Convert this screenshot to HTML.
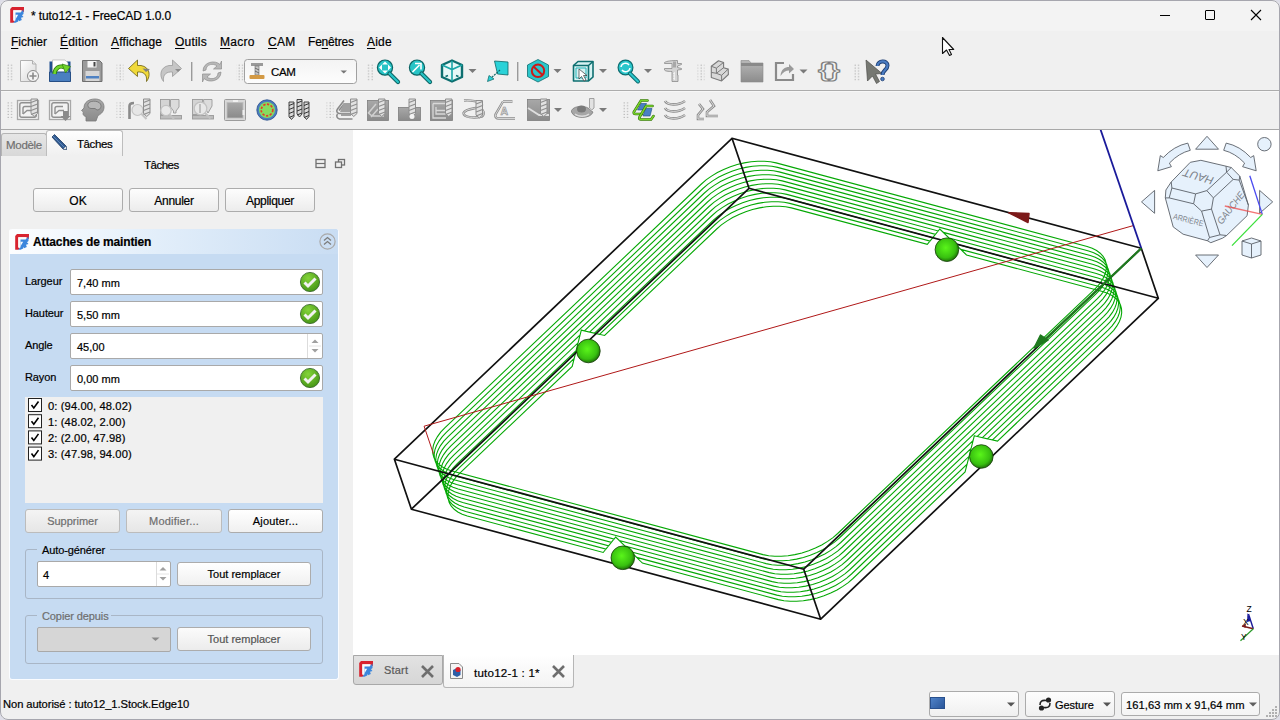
<!DOCTYPE html>
<html><head><meta charset="utf-8">
<style>
*{margin:0;padding:0;box-sizing:border-box}
html,body{width:1280px;height:720px;overflow:hidden;background:#dedee8;font-family:"Liberation Sans",sans-serif;font-size:12px;color:#000}
.a{position:absolute}
.t{position:absolute;white-space:nowrap;line-height:1;-webkit-text-stroke:0.2px currentColor}
#title{left:0;top:0;width:1280px;height:31px;background:#f3f3f3;border-radius:8px 8px 0 0}
.ul{text-decoration:underline;text-underline-offset:2px}
.grip{position:absolute;width:5px;background-image:radial-gradient(circle,#9a9a9a 0.7px,transparent 0.9px);background-size:3px 3px}
.btn{position:absolute;-webkit-text-stroke:0.2px currentColor;border:1px solid #acacac;border-radius:3px;background:linear-gradient(#fdfdfd,#ececec);text-align:center;line-height:21px}
.field{position:absolute;background:#fff;border:1px solid #a9a9a9;border-radius:2px}
</style></head><body>
<!-- window border -->
<div class="a" style="left:0;top:0;width:1280px;height:720px;background:#f0f0f0;border-radius:8px"></div>

<!-- TITLE BAR -->
<div id="title" class="a">
  <svg class="a" style="left:0;top:0" width="32" height="30"><g id="fclogo"><path d="M10.2,9L12,7H24V11.5L21.5,13.5V10.2H13.3V20.5L15,21L13.5,22.8H10.2Z" fill="#d8232f"/><path d="M13.3,10.2H21.5V13.5L15,20.5H13.3Z" fill="#fafafa"/><path d="M15.5,12.5H20.5L23.5,9.5V14L22,15.2L23.5,17L21,17.8L21.8,20L19,21.3L18.2,19.8V21.5L15.5,22.8H13.2L15.5,20.3Z" fill="#3b86dc"/><path d="M18.2,14.8H15.5V19.3" fill="#fafafa"/></g></svg>

  <div class="t" style="left:31px;top:10px;font-size:12px;letter-spacing:-0.1px">* tuto12-1 - FreeCAD 1.0.0</div>
  <div class="a" style="left:1160px;top:15px;width:10px;height:1px;background:#000"></div>
  <div class="a" style="left:1205px;top:10px;width:10px;height:10px;border:1px solid #000;border-radius:1px"></div>
  <svg class="a" style="left:1250px;top:9px" width="12" height="12"><path d="M1,1L11,11M11,1L1,11" stroke="#000" stroke-width="1.1"/></svg>
</div>

<!-- MENU -->
<div class="t" style="left:11px;top:36px;letter-spacing:0px"><span class="ul">F</span>ichier</div>
<div class="t" style="left:60px;top:36px;letter-spacing:0.2px"><span class="ul">É</span>dition</div>
<div class="t" style="left:111px;top:36px;letter-spacing:0.15px"><span class="ul">A</span>ffichage</div>
<div class="t" style="left:175px;top:36px;letter-spacing:0.2px"><span class="ul">O</span>utils</div>
<div class="t" style="left:220px;top:36px;letter-spacing:0.25px"><span class="ul">M</span>acro</div>
<div class="t" style="left:268px;top:36px;letter-spacing:0.3px"><span class="ul">C</span>AM</div>
<div class="t" style="left:308px;top:36px;letter-spacing:-0.2px">Fe<span class="ul">n</span>êtres</div>
<div class="t" style="left:367px;top:36px;letter-spacing:0.2px"><span class="ul">A</span>ide</div>

<!-- TOOLBARS -->
<div class="a" style="left:1px;top:90px;width:1278px;height:1px;background:#acacac"></div><div class="a" style="left:1px;top:91px;width:1278px;height:1px;background:#f7f7f7"></div>
<div class="a" style="left:1px;top:129px;width:1278px;height:1px;background:#a8a8a8"></div>
<svg class="a" style="left:0;top:0" width="1280" height="130" viewBox="0 0 1280 130">
<defs>
  <pattern id="gp" width="3.5" height="2.9" patternUnits="userSpaceOnUse"><rect x="0.6" y="0.8" width="1.1" height="1.1" fill="#a8a8a8"/></pattern>
  <linearGradient id="gpage" x1="0" y1="0" x2="1" y2="1"><stop offset="0" stop-color="#fff"/><stop offset="1" stop-color="#d8d8d8"/></linearGradient>
  <linearGradient id="ggray" x1="0" y1="0" x2="0" y2="1"><stop offset="0" stop-color="#b8b8b8"/><stop offset="1" stop-color="#8c8c8c"/></linearGradient>
  <linearGradient id="gcombo" x1="0" y1="0" x2="0" y2="1"><stop offset="0" stop-color="#f3f3f3"/><stop offset="1" stop-color="#fdfdfd"/></linearGradient>
</defs>
<!-- grips row1 -->
<rect x="6" y="63.5" width="7" height="17.4" fill="url(#gp)"/>
<rect x="116.5" y="63.5" width="7" height="17.4" fill="url(#gp)"/>
<rect x="236.5" y="63.5" width="7" height="17.4" fill="url(#gp)"/>
<rect x="366.5" y="63.5" width="7" height="17.4" fill="url(#gp)"/>
<rect x="697.5" y="63.5" width="7" height="17.4" fill="url(#gp)"/>
<rect x="853.5" y="63.5" width="7" height="17.4" fill="url(#gp)"/>
<!-- grips row2 -->
<rect x="6" y="102" width="7" height="17.4" fill="url(#gp)"/>
<rect x="116.5" y="102" width="7" height="17.4" fill="url(#gp)"/>
<rect x="326.5" y="102" width="7" height="17.4" fill="url(#gp)"/>
<rect x="622.5" y="102" width="7" height="17.4" fill="url(#gp)"/>

<!-- ROW 1 -->
<!-- new -->
<path d="M20.5,60.5H32.5L36,64V81.5H20.5Z" fill="url(#gpage)" stroke="#b0b0b0"/>
<path d="M32.5,60.5V64H36" fill="#e8e8e8" stroke="#b0b0b0"/>
<circle cx="33" cy="76" r="5.5" fill="#f4f4f4" stroke="#8a8a8a"/>
<path d="M33,72.5V79.5M29.5,76H36.5" stroke="#8a8a8a" stroke-width="1.6"/>
<!-- open -->
<path d="M49.5,61.5H53V70H67V61.5H70.5V81.5H49.5Z" fill="#1f4f8f"/>
<path d="M52.5,60H65L68,63V74H52.5Z" fill="#fff" stroke="#aaa" stroke-width="0.6"/>
<path d="M49.5,72H70.5V81.5H49.5Z" fill="#4a7fc0" stroke="#264f86"/>
<path d="M54.5,74C55,67.5 60,65 64.5,67.5" fill="none" stroke="#2e7a0e" stroke-width="4.2"/><path d="M54.5,74C55,67.5 60,65 64.5,67.5" fill="none" stroke="#6fd42a" stroke-width="2.6"/><path d="M62,64L70.5,66.5L65.5,73Z" fill="#6fd42a" stroke="#2e7a0e" stroke-width="0.7"/>
<!-- save -->
<path d="M82.5,60.5H99.5L102,63V81.5H82.5Z" fill="#9a9a9a" stroke="#6f6f6f"/>
<rect x="87.5" y="61" width="9" height="6.5" fill="#f6f6f6"/>
<rect x="93.5" y="62" width="2" height="4.5" fill="#444"/>
<rect x="85.5" y="71" width="14" height="10" fill="#d6d6d6"/>
<rect x="86" y="76" width="13" height="2.5" fill="#4f82c3"/>
<!-- undo -->
<path d="M137.5,60L128.5,68.5L137.5,76.5V72C143,71.5 147.5,74 146.5,81.5C151,76 150,67 141,65.5H137.5Z" fill="#f0d93a" stroke="#6b5f10" stroke-width="0.8"/>
<path d="M142.5,68.5L150,69L146,72Z" fill="#808080"/>
<!-- redo -->
<path d="M172.5,60L181.5,68.5L172.5,76.5V72C167,71.5 162.5,74 163.5,81.5C159,76 160,67 169,65.5H172.5Z" fill="#c6c6c6" stroke="#9a9a9a" stroke-width="0.8"/>
<path d="M175,69L181,69L178,72Z" fill="#8c8c8c"/>
<rect x="191" y="62" width="1.4" height="19" fill="#9a9a9a"/>
<!-- refresh -->
<path d="M203,71C203,62 215,59.5 220,64.5L221.5,61V69H213.5L217,66C213.5,63 206,64 206,70Z" fill="#b8b8b8" stroke="#8e8e8e" stroke-width="0.7"/>
<path d="M221,72C221,81 209,83.5 204,78.5L202.5,82V74H210.5L207,77C210.5,80 218,79 218,73Z" fill="#b8b8b8" stroke="#8e8e8e" stroke-width="0.7"/>
<!-- combo -->
<rect x="244.5" y="59.5" width="112" height="24" rx="3" fill="url(#gcombo)" stroke="#a0a0a0"/>
<rect x="251" y="63" width="12" height="3" fill="#9a9a9a"/>
<rect x="255" y="66" width="4" height="9" fill="#c8c8c8" stroke="#6a6a6a" stroke-width="0.6"/>
<path d="M255,68L259,70M255,71L259,73" stroke="#444" stroke-width="0.7"/>
<rect x="249.5" y="75" width="15" height="4" rx="1" fill="#d39a45"/>
<path d="M340.5,70.5H347L343.75,73.5Z" fill="#777"/>

<!-- teal view icons -->
<g stroke="#0d6464" fill="#27c4c6">
  <circle cx="385" cy="67.6" r="7.6" stroke-width="1.2"/>
  <path d="M389.5,73.5L398,82" stroke="#0d6464" stroke-width="4.2" stroke-linecap="round"/>
  <path d="M389.5,73.5L398,82" stroke="#27c4c6" stroke-width="2.2" stroke-linecap="round"/>
  <path d="M385,61.5L388,64.5H382ZM385,73.5L388,70.5H382ZM379,67.6L382,64.6V70.6ZM391,67.6L388,64.6V70.6Z" fill="#fff" stroke="none"/>
  <circle cx="417" cy="67.6" r="7.6" stroke-width="1.2"/>
  <path d="M421.5,73.5L430,82" stroke="#0d6464" stroke-width="4.2" stroke-linecap="round"/>
  <path d="M421.5,73.5L430,82" stroke="#27c4c6" stroke-width="2.2" stroke-linecap="round"/>
  <path d="M412.5,72L419.5,65M415,63.5H421V69.5" stroke="#fff" stroke-width="1.6" fill="none"/>
</g>
<path d="M452,60.5L462,65V77L452,81.5L442,77V65Z" fill="#e8f8f8"/>
<g fill="none" stroke="#0e6f70" stroke-width="2.4" stroke-linejoin="round">
  <path d="M452,60.5L462,65V77L452,81.5L442,77V65Z"/>
</g>
<g fill="none" stroke="#1aa6a8" stroke-width="1.6">
  <path d="M442,65L452,69.5L462,65M452,69.5V81M452,61V69"/>
</g>
<path d="M445.5,76.5L448,75.5M456,75.5L458.5,76.5" stroke="#0e6f70" stroke-width="1.6"/>
<path d="M468.5,69H476.5L472.5,73Z" fill="#7a7a7a"/>
<path d="M494.5,61L508,62V75L497.5,74Z" fill="#2ad2d8" stroke="#0d6464" stroke-width="0.8"/>
<path d="M500,70L490,79" stroke="#0d6464" stroke-width="1.2" stroke-dasharray="2 1"/>
<path d="M487.5,81.5L489,75.5L494,79Z" fill="#2ad2d8" stroke="#0d6464" stroke-width="0.7"/>
<rect x="517" y="62" width="1.4" height="19" fill="#9a9a9a"/>
<!-- draw style -->
<path d="M538,59.5L548.5,65V76.5L538,82L527.5,76.5V65Z" fill="#2bc6cb" stroke="#0e6d70" stroke-width="0.8"/>
<circle cx="538" cy="70.8" r="6.2" fill="none" stroke="#cc1a1a" stroke-width="2"/>
<path d="M533.5,66.5L542.5,75" stroke="#cc1a1a" stroke-width="2"/>
<path d="M553.5,69H561.5L557.5,73Z" fill="#7a7a7a"/>
<!-- box select -->
<path d="M573.5,65.5L578,61.5H593V77L588.5,81H573.5Z" fill="#d6f2f2"/>
<g fill="none" stroke="#0e6f70" stroke-width="1.6" stroke-linejoin="round">
<path d="M573.5,65.5L578,61.5H593V77L588.5,81H573.5Z"/>
<path d="M573.5,65.5H588.5V81M588.5,65.5L593,61.5"/>
</g>
<g fill="none" stroke="#22b4b8" stroke-width="1"><path d="M576,68H586V78H576Z"/></g>
<path d="M579,69V79L581.5,76.5L584,81L586,80L583.5,75.5H587Z" fill="#fff" stroke="#333" stroke-width="0.7"/>
<path d="M599,69H607L603,73Z" fill="#7a7a7a"/>
<!-- mag refresh -->
<circle cx="625.5" cy="67.5" r="7.4" fill="#2bc6cb" stroke="#0e6d70" stroke-width="1.2"/>
<path d="M630,73.5L638,81.5" stroke="#0e6d70" stroke-width="4" stroke-linecap="round"/>
<path d="M630,73.5L638,81.5" stroke="#2bc6cb" stroke-width="2" stroke-linecap="round"/>
<path d="M621,67C621.5,63 627,62 629,65M630,68C629.5,72 624,73 622,70" fill="none" stroke="#fff" stroke-width="1.5"/>
<path d="M644,69H652L648,73Z" fill="#7a7a7a"/>
<!-- caliper -->
<path d="M664.5,62.5C667,61 671,60.5 677.5,60.5V63.5H681.5V64.5L677.5,66V67.5L681.5,68.5V69.5L677.5,70V75H678V81.5H672V71.5C668,71.5 665,71 664.5,70V68.5H672V63.5H664.5Z" fill="#d4d4d4" stroke="#8c8c8c" stroke-width="0.8"/>
<path d="M674.5,72V80M673,73.5H675M673,76H675M673,78.5H675" stroke="#f4f4f4" stroke-width="0.8"/>
<rect x="673" y="61.5" width="3" height="6" fill="#a8a8a8"/>
<!-- part boxes -->
<path d="M711.3,66.3 L718.5,60.7 L723.6,62.4 L723.6,67.7 L728.2,69.1 L728.4,74.5 L721.6,80.9 L711.3,77.4Z" fill="#d8d8d8" stroke="#7a7a7a" stroke-width="1.1" stroke-linejoin="round"/>
<path d="M711.3,66.3 L716.4,68.1 L723.6,62.4 M716.4,68.1 L716.4,73.3 L711.3,72.4 M716.4,73.3 L723.6,67.7 M716.4,73.3 L721.6,75.3 L728.2,69.1 M721.6,75.3 L721.6,80.9" fill="none" stroke="#7a7a7a" stroke-width="1"/>
<!-- folder -->
<path d="M741,60.5H749L751,63H763V82H741Z" fill="url(#ggray)" stroke="#8a8a8a" stroke-width="0.6"/>
<rect x="741" y="63" width="22" height="3" fill="#8a8a8a"/>
<!-- share -->
<path d="M784,63H776V80H793V74" fill="none" stroke="#8a8a8a" stroke-width="2.2"/>
<path d="M780.5,76C781,69 785,67 789,67V64L794,69L789,73.5V70.5C786,70.5 783,72 780.5,76Z" fill="#9a9a9a"/>
<path d="M799.5,69.5H807.5L803.5,73.5Z" fill="#7a7a7a"/>
<!-- braces -->
<text x="818" y="76.5" font-family="Liberation Sans" font-size="21" font-weight="bold" fill="#f4f4f4" stroke="#7e7e7e" stroke-width="1.1" textLength="22" lengthAdjust="spacingAndGlyphs">{}</text>
<!-- whats this -->
<path d="M866,60L882,73.5L875.5,74L879.5,81.5L876.5,83.5L872.5,76L867.5,81Z" fill="#767872" stroke="#4e4e4a" stroke-width="0.7" stroke-linejoin="round"/>
<path d="M877.5,66C877.5,60.5 887.5,59.5 887.5,65.5C887.5,70 882.5,70 882.5,75" fill="none" stroke="#1f3f73" stroke-width="4"/>
<path d="M877.5,66C877.5,60.5 887.5,59.5 887.5,65.5C887.5,70 882.5,70 882.5,75" fill="none" stroke="#4a7cc2" stroke-width="2.2"/>
<circle cx="882.5" cy="79" r="1.8" fill="#4a7cc2" stroke="#1f3f73" stroke-width="0.8"/>
<!-- ROW 2 (gray CAM icons) -->
<defs>
  <g id="drill"><path d="M0.5,0.5H7V15L3.75,18L0.5,15Z" fill="#e2e2e2" stroke="#8e8e8e" stroke-width="1"/><path d="M0.5,4L7,1.5M0.5,8L7,5.5M0.5,12L7,9.5M0.5,16L7,13.5" stroke="#8e8e8e" stroke-width="1.2"/></g>
  <g id="ddrill"><path d="M0.5,0.5H5.5V15L3,18L0.5,15Z" fill="#d8d8d8" stroke="#333" stroke-width="0.9"/><path d="M0.5,4L5.5,2M0.5,8L5.5,6M0.5,12L5.5,10M0.5,16L5.5,14" stroke="#333" stroke-width="1"/></g>
  <linearGradient id="gdk" x1="0" y1="0" x2="0" y2="1"><stop offset="0" stop-color="#a8a8a8"/><stop offset="1" stop-color="#8a8a8a"/></linearGradient>
</defs>
<g fill="none" stroke="#909090" stroke-width="1.3">
  <rect x="17.5" y="100.5" width="21" height="19" fill="#f2f2f2" stroke="#a8a8a8"/>
  <rect x="19.8" y="102.8" width="16.5" height="14.5" rx="2" stroke-width="1.4"/>
  <path d="M23,114V108.5C23,107 24,106.5 25,106.5H31" stroke-width="1.4"/>
  <path d="M23,114L27,110.5H32"/>
  <rect x="49.5" y="100.5" width="21" height="19" fill="#f2f2f2" stroke="#a8a8a8"/>
  <rect x="51.8" y="102.8" width="16.5" height="14.5" rx="2" stroke-width="1.4"/>
  <path d="M55,114V108.5C55,107 56,106.5 57,106.5H63" stroke-width="1.4"/>
  <path d="M55,114L59,110.5H64"/>
</g>
<use href="#drill" x="30.5" y="98.5"/>
<path d="M63,111H68V116H70.5L65.5,121L60.5,116H63Z" fill="#8a8a8a"/>
<!-- head -->
<path d="M86,121V116.5C83,116 82.5,113.5 83.5,112L81.5,110.5L84,108C84,102 89,99 95,99C100.5,99 104,102 104,107C104,111 101.5,114 98,115.5L96,121Z" fill="url(#gdk)" stroke="#7a7a7a" stroke-width="0.8"/>
<path d="M88,104C89,100.5 98,100 100.5,104C102,107 100,110 97,110L95,108.5H91C88.5,108.5 87.5,106 88,104Z" fill="#b8b8b8" stroke="#707070" stroke-width="0.8"/>
<!-- 128-150 -->
<path d="M129.5,119V106C129.5,103.5 131,103 134,103" fill="none" stroke="#8a8a8a" stroke-width="2.6"/>
<circle cx="137.5" cy="110" r="5.5" fill="#e6e6e6" stroke="#c4c4c4" stroke-width="1.2"/>
<path d="M141.5,114L146.5,119" stroke="#c4c4c4" stroke-width="2"/>
<use href="#drill" x="143" y="98.5"/>
<!-- 160-182 -->
<g stroke="#9a9a9a" stroke-width="0.9">
<rect x="160.5" y="99.5" width="9" height="15" fill="#d4d4d4"/>
<path d="M170.5,99.5H179V107L176,111V113H173.5V111L170.5,107Z" fill="#dcdcdc"/>
<rect x="160.5" y="115.5" width="21" height="3.5" fill="#bdbdbd"/>
<rect x="192.5" y="99.5" width="10" height="15" fill="#d4d4d4"/>
<path d="M203.5,99.5H212V106L208,113L204,106Z" fill="#dcdcdc"/>
<rect x="192.5" y="115.5" width="21" height="3.5" fill="#bdbdbd"/>
</g>
<circle cx="166" cy="110.5" r="5.2" fill="#e8e8e8" stroke="#c2c2c2" stroke-width="1.2"/>
<path d="M169.5,114.5L174,119" stroke="#c2c2c2" stroke-width="2"/>
<circle cx="200.5" cy="108.5" r="6.3" fill="#e8e8e8" stroke="#c2c2c2" stroke-width="1.3"/>
<path d="M205,113L210.5,118.5" stroke="#c2c2c2" stroke-width="2.2"/>
<path d="M200,104V113" stroke="#b0b0b0" stroke-width="1.5"/>
<!-- square 224-246 -->
<rect x="224.5" y="99.5" width="21" height="21" rx="1" fill="#d8d8d8" stroke="#9c9c9c"/>
<rect x="227" y="102.5" width="16" height="15.5" fill="url(#gdk)" stroke="#bdbdbd" stroke-width="0.8"/>
<rect x="233" y="100" width="5" height="2" fill="#f0f0f0"/>
<rect x="242.5" y="110" width="2" height="5" fill="#f0f0f0"/>
<!-- circle 256-278 -->
<circle cx="267" cy="110" r="10.2" fill="#4a7cc0" stroke="#2a4f8a" stroke-width="0.8"/>
<circle cx="267" cy="110" r="8" fill="#86dc60"/>
<circle cx="267" cy="110" r="5.8" fill="none" stroke="#e63c2a" stroke-width="1.7" stroke-dasharray="2.3 1.5"/>
<!-- drills 288-310 -->
<use href="#ddrill" x="288.5" y="101.5"/>
<use href="#ddrill" x="296.5" y="99"/>
<use href="#ddrill" x="303.5" y="101.5"/>
<!-- 336-358 layers -->
<g fill="none" stroke="#8a8a8a" stroke-width="1.6">
<path d="M344,100.5L337.5,109C336,111 337,113 339,113.5H352"/>
<path d="M344,104L339,110.5"/>
<path d="M337.5,114C336,116 337,118.5 339.5,119H352.5"/>
</g>
<path d="M343.5,103H350V112H340Z" fill="#a0a0a0"/>
<rect x="341" y="113.5" width="10" height="2.5" fill="#a0a0a0"/>
<use href="#drill" x="350" y="98.5"/>
<!-- 367-389 -->
<rect x="367.5" y="100.5" width="21" height="20" fill="url(#gdk)" stroke="#7e7e7e" stroke-width="0.8"/>
<path d="M376,104L368.5,113L372,116L384,116M378,109L371,117" fill="none" stroke="#d0d0d0" stroke-width="1.5"/>
<use href="#drill" x="378" y="98.5"/>
<!-- 398-421 -->
<rect x="398.5" y="107.5" width="22" height="13" fill="url(#gdk)" stroke="#7e7e7e" stroke-width="0.8"/>
<use href="#drill" x="408.5" y="98.5"/>
<circle cx="412" cy="116.5" r="2.5" fill="#f4f4f4"/>
<!-- 430-452 -->
<rect x="430.5" y="100.5" width="22" height="20" fill="url(#gdk)" stroke="#7e7e7e" stroke-width="0.8"/>
<path d="M433,103.5H446M433,103.5V118H446M436,110.5H446M436,107V114H446" fill="none" stroke="#d8d8d8" stroke-width="1.3"/>
<use href="#drill" x="445" y="98.5"/>
<!-- 462-485 spiral -->
<path d="M464,100.5C470,100 480,101 482,105C481.5,109 466,107.5 463.5,113C463.5,117.5 474,118.5 482,116.5C485,114 484,110 480,108" fill="none" stroke="#8a8a8a" stroke-width="2.4"/>
<path d="M464,100.5C470,100 480,101 482,105C481.5,109 466,107.5 463.5,113C463.5,117.5 474,118.5 482,116.5C485,114 484,110 480,108" fill="none" stroke="#e8e8e8" stroke-width="0.8"/>
<use href="#drill" x="475.5" y="100"/>
<!-- 494-516 A -->
<path d="M503,101.5L495.5,114.5C495,117 496,118.5 499,118.5H515M503,101.5H512.5" fill="none" stroke="#8a8a8a" stroke-width="2.4"/>
<path d="M503,101.5L495.5,114.5C495,117 496,118.5 499,118.5H515M503,101.5H512.5" fill="none" stroke="#e8e8e8" stroke-width="0.8"/>
<text x="500.5" y="114.5" font-family="Liberation Sans" font-size="10.5" font-weight="bold" fill="#d8d8d8" stroke="#8a8a8a" stroke-width="0.6">A</text>
<!-- 527-550 -->
<rect x="527.5" y="99.5" width="22" height="21" fill="url(#gdk)" stroke="#7e7e7e" stroke-width="0.8"/>
<path d="M528,108L539,115H549" fill="none" stroke="#dedede" stroke-width="1.8"/>
<use href="#drill" x="540" y="98.5"/>
<path d="M554,108H562L558,112Z" fill="#7a7a7a"/>
<!-- 571-593 -->
<path d="M571.5,110.5C574,105 588,105 590.5,110.5L593,112C591,119 574,119.5 571.5,112Z" fill="#a6a6a6" stroke="#7e7e7e" stroke-width="0.8"/>
<path d="M575,114C578,117 586,117 589,114" fill="none" stroke="#dcdcdc" stroke-width="1.3"/>
<ellipse cx="581.5" cy="109" rx="4.5" ry="3.5" fill="#7a7a7a"/>
<path d="M589.5,98.5H594V108L591.75,110L589.5,108Z" fill="#e2e2e2" stroke="#8e8e8e" stroke-width="0.8"/>
<path d="M599,108H607L603,112Z" fill="#7a7a7a"/>
<!-- green layers 633-655 -->
<path d="M641,103.5H646.5L644,110H637.5Z" fill="#4a80c4" stroke="#1e4a8a" stroke-width="0.6"/>
<path d="M645.5,108.5H652L650,116H643Z" fill="#4a80c4" stroke="#1e4a8a" stroke-width="0.6"/>
<path d="M647.5,100.5H641L633.8,112C633.5,113 634,114 635.5,114H642" fill="none" stroke="#2f6a08" stroke-width="2.6" stroke-linecap="round"/>
<path d="M647.5,100.5H641L633.8,112C633.5,113 634,114 635.5,114H642" fill="none" stroke="#7ad62a" stroke-width="1.5" stroke-linecap="round"/>
<path d="M652.5,106H646L639.3,117.5C639,118.5 639.5,119.5 641,119.5H651L653.5,116" fill="none" stroke="#2f6a08" stroke-width="2.6" stroke-linecap="round"/>
<path d="M652.5,106H646L639.3,117.5C639,118.5 639.5,119.5 641,119.5H651L653.5,116" fill="none" stroke="#7ad62a" stroke-width="1.5" stroke-linecap="round"/>
<!-- stacked 664-686 -->
<path d="M665,101C667,105 678,106 685,101M665,108C667,112 678,113 685,108M665,115C667,119 678,120 685,115" fill="none" stroke="#8c8c8c" stroke-width="2.6"/>
<path d="M665,101C667,105 678,106 685,101M665,108C667,112 678,113 685,108M665,115C667,119 678,120 685,115" fill="none" stroke="#dadada" stroke-width="1"/>
<!-- zigzag 697-718 -->
<path d="M699,104L703,109L698,115V119H704M710,100L714,106L707,112V116H718" fill="none" stroke="#8c8c8c" stroke-width="2.6"/>
<path d="M699,104L703,109L698,115V119H704M710,100L714,106L707,112V116H718" fill="none" stroke="#dadada" stroke-width="1"/>
</svg>
<div class="t" style="left:271px;top:67px;font-size:11.5px;letter-spacing:-0.4px">CAM</div>


<!-- LEFT PANEL -->
<!-- tabs -->
<div class="a" style="left:1px;top:133px;width:46px;height:23px;border:1px solid #b4b4b4;border-bottom:none;border-radius:3px 3px 0 0;background:linear-gradient(#e6e6e6,#d8d8d8)"></div>
<div class="t" style="left:6px;top:140px;font-size:11.5px;color:#707070;letter-spacing:-0.3px">Modèle</div>
<div class="a" style="left:46px;top:130px;width:77px;height:26px;border:1px solid #bdbdbd;border-bottom:none;border-radius:3px 3px 0 0;background:linear-gradient(#fefefe,#f0f0f0)"></div>
<svg class="a" style="left:50px;top:133px" width="18" height="18"><path d="M2,4L4.5,1.5L16,13L16.5,16.5L13,16Z" fill="#2f5a92" stroke="#1c3a63" stroke-width="0.8"/><path d="M3,3L15,15" stroke="#6a90c0" stroke-width="0.8"/><path d="M13,16L16.5,16.5L16,13Z" fill="#fff" stroke="#1c3a63" stroke-width="0.5"/></svg>
<div class="t" style="left:77px;top:139px;font-size:11.5px;letter-spacing:-0.4px">Tâches</div>

<div class="t" style="left:144px;top:160px;font-size:11.5px;letter-spacing:-0.5px">Tâches</div>
<svg class="a" style="left:314px;top:158px" width="32" height="11"><rect x="2" y="1.5" width="9" height="8" fill="none" stroke="#707070" stroke-width="1.3"/><path d="M2,5.5H11" stroke="#707070" stroke-width="1.2"/><rect x="24.5" y="1.5" width="6" height="5.5" fill="none" stroke="#707070" stroke-width="1.3"/><rect x="21.5" y="4" width="6" height="5.5" fill="#f0f0f0" stroke="#707070" stroke-width="1.3"/></svg>

<div class="btn" style="left:33px;top:188px;width:90px;height:24px;line-height:24px">OK</div>
<div class="btn" style="left:129px;top:188px;width:90px;height:24px;line-height:24px;letter-spacing:-0.3px">Annuler</div>
<div class="btn" style="left:225px;top:188px;width:90px;height:24px;line-height:24px;letter-spacing:-0.3px">Appliquer</div>

<!-- task box -->
<div class="a" style="left:9px;top:229px;width:330px;height:451px;background:#c6dbf2;border-radius:3px 3px 3px 3px;border:1px solid #fafcff;border-top:none"></div>
<div class="a" style="left:9px;top:229px;width:329px;height:25px;border-radius:3px 3px 0 0;background:linear-gradient(90deg,#fdfeff 0%,#e2eefa 45%,#c9ddf3 100%)"></div>
<svg class="a" style="left:5px;top:227px" width="32" height="30"><use href="#fclogo"/></svg>
<div class="t" style="left:33px;top:235.6px;font-size:12px;font-weight:bold;letter-spacing:-0.12px">Attaches de maintien</div>
<svg class="a" style="left:318px;top:232px" width="19" height="19"><circle cx="9.5" cy="9.5" r="7.6" fill="none" stroke="#a9a9a9" stroke-width="1.2"/><path d="M6,8.5L9.5,5.5L13,8.5M6,12.5L9.5,9.5L13,12.5" fill="none" stroke="#7c7c7c" stroke-width="1.3"/></svg>

<div class="t" style="left:25px;top:276.3px;font-size:11px;letter-spacing:-0.1px">Largeur</div>
<div class="t" style="left:25px;top:308.3px;font-size:11px;letter-spacing:-0.1px">Hauteur</div>
<div class="t" style="left:25px;top:340.3px;font-size:11px;letter-spacing:-0.1px">Angle</div>
<div class="t" style="left:25px;top:372.3px;font-size:11px;letter-spacing:-0.1px">Rayon</div>

<div class="field" style="left:70px;top:269px;width:253px;height:26px"></div>
<div class="field" style="left:70px;top:301px;width:253px;height:26px"></div>
<div class="field" style="left:70px;top:333px;width:253px;height:26px"></div>
<div class="field" style="left:70px;top:365px;width:253px;height:26px"></div>
<div class="t" style="left:77px;top:278.3px;font-size:11px">7,40 mm</div>
<div class="t" style="left:77px;top:310.3px;font-size:11px">5,50 mm</div>
<div class="t" style="left:77px;top:342.3px;font-size:11px">45,00</div>
<div class="t" style="left:77px;top:374.3px;font-size:11px">0,00 mm</div>
<svg class="a" style="left:298px;top:270px" width="24" height="120">
  <defs><radialGradient id="gck" cx="0.4" cy="0.3" r="0.8"><stop offset="0" stop-color="#84d43a"/><stop offset="1" stop-color="#3f8f12"/></radialGradient></defs>
  <g id="ck"><circle cx="12" cy="12" r="9.6" fill="url(#gck)" stroke="#2f5f22" stroke-width="0.8"/><path d="M6.5,12.5L10,16L17.5,8.5" fill="none" stroke="#f2f2f2" stroke-width="3"/></g>
  <use href="#ck" y="32"/>
  <use href="#ck" y="96"/>
</svg>
<div class="a" style="left:307px;top:334px;width:15px;height:24px;border-left:1px solid #dcdcdc"></div>
<svg class="a" style="left:309px;top:336px" width="12" height="20"><path d="M2.5,7L6,3.5L9.5,7Z" fill="#a0a0a0"/><path d="M2.5,13L6,16.5L9.5,13Z" fill="#a0a0a0"/><path d="M0,10H12" stroke="#e4e4e4"/></svg>

<!-- list -->
<div class="a" style="left:25px;top:397px;width:298px;height:106px;background:#f0f0f0"></div>
<svg class="a" style="left:28px;top:398px" width="16" height="64">
  <g id="cb"><rect x="0.5" y="0.5" width="13" height="13" fill="#fff" stroke="#222"/><path d="M3.5,7L5.8,10L10.5,3.5" fill="none" stroke="#000" stroke-width="1.6"/></g>
  <use href="#cb" y="16.2"/><use href="#cb" y="32.4"/><use href="#cb" y="48.6"/>
</svg>
<div class="t" style="left:48px;top:400.5px;font-size:11.2px;letter-spacing:0.1px">0: (94.00, 48.02)</div>
<div class="t" style="left:48px;top:416.5px;font-size:11.2px;letter-spacing:0.1px">1: (48.02, 2.00)</div>
<div class="t" style="left:48px;top:432.5px;font-size:11.2px;letter-spacing:0.1px">2: (2.00, 47.98)</div>
<div class="t" style="left:48px;top:448.5px;font-size:11.2px;letter-spacing:0.1px">3: (47.98, 94.00)</div>

<div class="btn" style="left:25px;top:509px;width:95px;height:24px;color:#6e6e6e;font-size:11px;line-height:22px;background:linear-gradient(#f4f4f4,#e6e6e6);border-color:#bcbcbc">Supprimer</div>
<div class="btn" style="left:126px;top:509px;width:96px;height:24px;color:#6e6e6e;font-size:11px;line-height:22px;background:linear-gradient(#f4f4f4,#e6e6e6);border-color:#bcbcbc;letter-spacing:0.2px">Modifier...</div>
<div class="btn" style="left:228px;top:509px;width:95px;height:24px;font-size:11px;line-height:22px;background:linear-gradient(#ffffff,#f0f0f0);letter-spacing:0.2px">Ajouter...</div>

<!-- auto-generer -->
<div class="a" style="left:25px;top:549px;width:298px;height:50px;border:1px solid #a9b6c6;border-radius:3px"></div>
<div class="a" style="left:37px;top:545px;width:73px;height:10px;background:#c6dbf2"></div>
<div class="t" style="left:42px;top:545px;font-size:11px;letter-spacing:-0.1px">Auto-générer</div>
<div class="field" style="left:37px;top:561px;width:134px;height:26px"></div>
<div class="t" style="left:43px;top:569.5px;font-size:11px">4</div>
<div class="a" style="left:156px;top:562px;width:14px;height:24px;border-left:1px solid #dcdcdc"></div>
<svg class="a" style="left:157px;top:563px" width="12" height="22"><path d="M2.5,7.5L6,4L9.5,7.5Z" fill="#a0a0a0"/><path d="M2.5,14L6,17.5L9.5,14Z" fill="#a0a0a0"/><path d="M0,11H12" stroke="#e4e4e4"/></svg>
<div class="btn" style="left:177px;top:562px;width:134px;height:24px;font-size:11px;line-height:22px;background:linear-gradient(#ffffff,#f0f0f0)">Tout remplacer</div>

<!-- copier depuis -->
<div class="a" style="left:25px;top:615px;width:298px;height:49px;border:1px solid #a9b6c6;border-radius:3px"></div>
<div class="a" style="left:37px;top:610px;width:74px;height:10px;background:#c6dbf2"></div>
<div class="t" style="left:42px;top:611px;font-size:11px;color:#6e6e6e;letter-spacing:-0.1px">Copier depuis</div>
<div class="a" style="left:37px;top:627px;width:134px;height:25px;border:1px solid #a9a9a9;border-radius:2px;background:#d6d6d6"></div>
<svg class="a" style="left:150px;top:636px" width="12" height="6"><path d="M1.5,1.5H9.5L5.5,5Z" fill="#8a8a8a"/></svg>
<div class="btn" style="left:177px;top:627px;width:134px;height:24px;font-size:11px;line-height:22px;color:#555;background:linear-gradient(#fbfbfb,#ececec)">Tout remplacer</div>


<!-- VIEWPORT -->
<div class="a" style="left:353px;top:130px;width:926px;height:525px;background:#fff;overflow:hidden">
<svg class="a" style="left:-353px;top:-130px" width="1280" height="720">
  <path d="M776.1,162.9 L1087.1,246.5 L1087.1,246.5 L1092.2,248.2 L1096.6,250.5 L1100.2,253.2 L1103.1,256.3 L1105.1,259.8 L1106.2,263.7 L1106.4,267.8 L1105.7,272.1 L1104.1,276.5 L1101.6,280.9 L1098.4,285.3 L1094.3,289.6 L1094.3,289.6 L837.7,533.5 L837.7,533.5 L833.0,537.6 L827.6,541.4 L821.7,544.9 L815.4,548.1 L808.7,550.8 L801.9,553.0 L794.9,554.6 L788.0,555.8 L781.3,556.3 L774.8,556.3 L768.7,555.7 L763.0,554.6 L763.0,554.6 L452.0,471.0 L452.0,471.0 L446.9,469.3 L442.5,467.0 L438.9,464.3 L436.0,461.2 L434.0,457.7 L432.9,453.8 L432.7,449.7 L433.4,445.4 L435.0,441.0 L437.5,436.6 L440.7,432.2 L444.8,427.9 L444.8,427.9 L701.4,184.0 L701.4,184.0 L706.1,179.9 L711.5,176.1 L717.4,172.6 L723.7,169.4 L730.4,166.7 L737.2,164.5 L744.2,162.9 L751.1,161.7 L757.8,161.2 L764.3,161.2 L770.4,161.8 L776.1,162.9Z M777.6,167.4 L1088.7,251.0 L1088.7,251.0 L1093.7,252.7 L1098.1,255.0 L1101.8,257.7 L1104.6,260.8 L1106.6,264.3 L1107.7,268.2 L1107.9,272.3 L1107.2,276.6 L1105.6,281.0 L1103.2,285.4 L1099.9,289.8 L1095.8,294.1 L1095.8,294.1 L839.3,538.0 L839.3,538.0 L834.5,542.1 L829.1,545.9 L823.2,549.4 L816.9,552.6 L810.2,555.3 L803.4,557.5 L796.5,559.1 L789.6,560.3 L782.8,560.8 L776.3,560.8 L770.2,560.2 L764.6,559.1 L764.6,559.1 L453.5,475.5 L453.5,475.5 L448.4,473.8 L444.1,471.5 L440.4,468.8 L437.6,465.7 L435.6,462.2 L434.4,458.3 L434.2,454.2 L434.9,449.9 L436.5,445.5 L439.0,441.1 L442.3,436.7 L446.3,432.4 L446.3,432.4 L702.9,188.5 L702.9,188.5 L707.7,184.4 L713.0,180.6 L718.9,177.1 L725.3,173.9 L731.9,171.2 L738.8,169.0 L745.7,167.4 L752.6,166.2 L759.4,165.7 L765.9,165.7 L772.0,166.3 L777.6,167.4Z M779.1,171.9 L1090.2,255.5 L1090.2,255.5 L1095.2,257.2 L1099.6,259.5 L1103.3,262.2 L1106.1,265.3 L1108.1,268.8 L1109.2,272.7 L1109.5,276.8 L1108.8,281.1 L1107.2,285.5 L1104.7,289.9 L1101.4,294.3 L1097.4,298.6 L1097.4,298.6 L840.8,542.5 L840.8,542.5 L836.0,546.6 L830.7,550.4 L824.8,553.9 L818.4,557.1 L811.8,559.8 L804.9,562.0 L798.0,563.6 L791.1,564.8 L784.3,565.3 L777.8,565.3 L771.7,564.7 L766.1,563.6 L766.1,563.6 L455.0,480.0 L455.0,480.0 L450.0,478.3 L445.6,476.0 L441.9,473.3 L439.1,470.2 L437.1,466.7 L436.0,462.8 L435.8,458.7 L436.5,454.4 L438.1,450.0 L440.5,445.6 L443.8,441.2 L447.9,436.9 L447.9,436.9 L704.4,193.0 L704.4,193.0 L709.2,188.9 L714.6,185.1 L720.5,181.6 L726.8,178.4 L733.4,175.7 L740.3,173.5 L747.2,171.9 L754.1,170.7 L760.9,170.2 L767.4,170.2 L773.5,170.8 L779.1,171.9Z M780.7,176.4 L1091.7,260.0 L1091.7,260.0 L1096.8,261.7 L1101.2,264.0 L1104.8,266.7 L1107.7,269.8 L1109.7,273.3 L1110.8,277.2 L1111.0,281.3 L1110.3,285.6 L1108.7,290.0 L1106.2,294.4 L1102.9,298.8 L1098.9,303.1 L1098.9,303.1 L842.3,547.0 L842.3,547.0 L837.6,551.1 L832.2,554.9 L826.3,558.4 L820.0,561.6 L813.3,564.3 L806.5,566.5 L799.5,568.1 L792.6,569.3 L785.9,569.8 L779.4,569.8 L773.3,569.2 L767.6,568.1 L767.6,568.1 L456.6,484.5 L456.6,484.5 L451.5,482.8 L447.1,480.5 L443.5,477.8 L440.6,474.7 L438.6,471.2 L437.5,467.3 L437.3,463.2 L438.0,458.9 L439.6,454.5 L442.0,450.1 L445.3,445.7 L449.4,441.4 L449.4,441.4 L706.0,197.5 L706.0,197.5 L710.7,193.4 L716.1,189.6 L722.0,186.1 L728.3,182.9 L735.0,180.2 L741.8,178.0 L748.8,176.4 L755.7,175.2 L762.4,174.7 L768.9,174.7 L775.0,175.3 L780.7,176.4Z M782.2,180.9 L1093.3,264.5 L1093.3,264.5 L1098.3,266.2 L1102.7,268.5 L1106.3,271.2 L1109.2,274.3 L1111.2,277.8 L1112.3,281.7 L1112.5,285.8 L1111.8,290.1 L1110.2,294.5 L1107.8,298.9 L1104.5,303.3 L1100.4,307.6 L1100.4,307.6 L843.8,551.5 L843.8,551.5 L839.1,555.6 L833.7,559.4 L827.8,562.9 L821.5,566.1 L814.8,568.8 L808.0,571.0 L801.0,572.6 L794.1,573.8 L787.4,574.3 L780.9,574.3 L774.8,573.7 L769.2,572.6 L769.2,572.6 L458.1,489.0 L458.1,489.0 L453.0,487.3 L448.6,485.0 L445.0,482.3 L442.1,479.2 L440.1,475.7 L439.0,471.8 L438.8,467.7 L439.5,463.4 L441.1,459.0 L443.6,454.6 L446.9,450.2 L450.9,445.9 L450.9,445.9 L707.5,202.0 L707.5,202.0 L712.3,197.9 L717.6,194.1 L723.5,190.6 L729.9,187.4 L736.5,184.7 L743.4,182.5 L750.3,180.9 L757.2,179.7 L764.0,179.2 L770.4,179.2 L776.6,179.8 L782.2,180.9Z M783.7,185.4 L1094.8,269.0 L1094.8,269.0 L1099.8,270.7 L1104.2,273.0 L1107.9,275.7 L1110.7,278.8 L1112.7,282.3 L1113.8,286.2 L1114.0,290.3 L1113.3,294.6 L1111.8,299.0 L1109.3,303.4 L1106.0,307.8 L1102.0,312.1 L1102.0,312.1 L845.4,556.0 L845.4,556.0 L840.6,560.1 L835.2,563.9 L829.3,567.4 L823.0,570.6 L816.4,573.3 L809.5,575.5 L802.6,577.1 L795.7,578.3 L788.9,578.8 L782.4,578.8 L776.3,578.2 L770.7,577.1 L770.7,577.1 L459.6,493.5 L459.6,493.5 L454.6,491.8 L450.2,489.5 L446.5,486.8 L443.7,483.7 L441.7,480.2 L440.6,476.3 L440.4,472.2 L441.1,467.9 L442.6,463.5 L445.1,459.1 L448.4,454.7 L452.4,450.4 L452.4,450.4 L709.0,206.5 L709.0,206.5 L713.8,202.4 L719.2,198.6 L725.1,195.1 L731.4,191.9 L738.0,189.2 L744.9,187.0 L751.8,185.4 L758.7,184.2 L765.5,183.7 L772.0,183.7 L778.1,184.3 L783.7,185.4Z M785.2,189.9 L938.2,231.0 L939.8,229.0 L943.4,232.4 L1096.3,273.5 L1096.3,273.5 L1101.4,275.2 L1105.8,277.5 L1109.4,280.2 L1112.3,283.3 L1114.3,286.8 L1115.4,290.7 L1115.6,294.8 L1114.9,299.1 L1113.3,303.5 L1110.8,307.9 L1107.5,312.3 L1103.5,316.6 L1103.5,316.6 L977.3,436.5 L974.3,435.8 L973.0,440.6 L846.9,560.5 L846.9,560.5 L842.1,564.6 L836.8,568.4 L830.9,571.9 L824.5,575.1 L817.9,577.8 L811.0,580.0 L804.1,581.6 L797.2,582.8 L790.4,583.3 L784.0,583.3 L777.8,582.7 L772.2,581.6 L772.2,581.6 L619.3,540.5 L615.7,537.0 L614.1,539.1 L461.1,498.0 L461.1,498.0 L456.1,496.3 L451.7,494.0 L448.1,491.3 L445.2,488.2 L443.2,484.7 L442.1,480.8 L441.9,476.7 L442.6,472.4 L444.2,468.0 L446.6,463.6 L449.9,459.2 L454.0,454.9 L454.0,454.9 L580.1,335.0 L581.3,330.2 L584.4,330.9 L710.6,211.0 L710.6,211.0 L715.3,206.9 L720.7,203.1 L726.6,199.6 L732.9,196.4 L739.6,193.7 L746.4,191.5 L753.4,189.9 L760.3,188.7 L767.0,188.2 L773.5,188.2 L779.6,188.8 L785.2,189.9Z M786.8,194.4 L935.4,234.4 L939.8,229.0 L949.2,238.1 L1097.8,278.0 L1097.8,278.0 L1102.9,279.7 L1107.3,282.0 L1110.9,284.7 L1113.8,287.8 L1115.8,291.3 L1116.9,295.2 L1117.1,299.3 L1116.4,303.6 L1114.8,308.0 L1112.4,312.4 L1109.1,316.8 L1105.0,321.1 L1105.0,321.1 L982.4,437.7 L974.3,435.8 L971.1,448.4 L848.4,565.0 L848.4,565.0 L843.7,569.1 L838.3,572.9 L832.4,576.4 L826.1,579.6 L819.4,582.3 L812.6,584.5 L805.6,586.1 L798.7,587.3 L792.0,587.8 L785.5,587.8 L779.4,587.2 L773.7,586.1 L773.7,586.1 L625.1,546.1 L615.7,537.0 L611.3,542.4 L462.7,502.5 L462.7,502.5 L457.6,500.8 L453.2,498.5 L449.6,495.8 L446.7,492.7 L444.7,489.2 L443.6,485.3 L443.4,481.2 L444.1,476.9 L445.7,472.5 L448.2,468.1 L451.5,463.7 L455.5,459.4 L455.5,459.4 L578.1,342.8 L581.3,330.2 L589.5,332.1 L712.1,215.5 L712.1,215.5 L716.8,211.4 L722.2,207.6 L728.1,204.1 L734.4,200.9 L741.1,198.2 L747.9,196.0 L754.9,194.4 L761.8,193.2 L768.5,192.7 L775.0,192.7 L781.1,193.3 L786.8,194.4Z M788.3,198.9 L932.7,237.7 L939.8,229.0 L955.0,243.7 L1099.4,282.5 L1099.4,282.5 L1104.4,284.2 L1108.8,286.5 L1112.5,289.2 L1115.3,292.3 L1117.3,295.8 L1118.4,299.7 L1118.6,303.8 L1117.9,308.1 L1116.3,312.5 L1113.9,316.9 L1110.6,321.3 L1106.5,325.6 L1106.5,325.6 L987.4,438.8 L974.3,435.8 L969.1,456.3 L850.0,569.5 L850.0,569.5 L845.2,573.6 L839.8,577.4 L833.9,580.9 L827.6,584.1 L821.0,586.8 L814.1,589.0 L807.2,590.6 L800.3,591.8 L793.5,592.3 L787.0,592.3 L780.9,591.7 L775.3,590.6 L775.3,590.6 L630.9,551.8 L615.7,537.0 L608.6,545.8 L464.2,507.0 L464.2,507.0 L459.2,505.3 L454.8,503.0 L451.1,500.3 L448.3,497.2 L446.3,493.7 L445.2,489.8 L444.9,485.7 L445.6,481.4 L447.2,477.0 L449.7,472.6 L453.0,468.2 L457.0,463.9 L457.0,463.9 L576.1,350.7 L581.3,330.2 L594.5,333.2 L713.6,220.0 L713.6,220.0 L718.4,215.9 L723.7,212.1 L729.6,208.6 L736.0,205.4 L742.6,202.7 L749.5,200.5 L756.4,198.9 L763.3,197.7 L770.1,197.2 L776.6,197.2 L782.7,197.8 L788.3,198.9Z M789.8,203.4 L930.0,241.1 L939.8,229.0 L960.8,249.4 L1100.9,287.0 L1100.9,287.0 L1106.0,288.7 L1110.3,291.0 L1114.0,293.7 L1116.8,296.8 L1118.8,300.3 L1120.0,304.2 L1120.2,308.3 L1119.5,312.6 L1117.9,317.0 L1115.4,321.4 L1112.1,325.8 L1108.1,330.1 L1108.1,330.1 L992.5,440.0 L974.3,435.8 L967.1,464.1 L851.5,574.0 L851.5,574.0 L846.7,578.1 L841.4,581.9 L835.5,585.4 L829.1,588.6 L822.5,591.3 L815.6,593.5 L808.7,595.1 L801.8,596.3 L795.0,596.8 L788.5,596.8 L782.4,596.2 L776.8,595.1 L776.8,595.1 L636.7,557.4 L615.7,537.0 L605.9,549.1 L465.7,511.5 L465.7,511.5 L460.7,509.8 L456.3,507.5 L452.6,504.8 L449.8,501.7 L447.8,498.2 L446.7,494.3 L446.5,490.2 L447.2,485.9 L448.8,481.5 L451.2,477.1 L454.5,472.7 L458.6,468.4 L458.6,468.4 L574.2,358.5 L581.3,330.2 L599.5,334.4 L715.1,224.5 L715.1,224.5 L719.9,220.4 L725.3,216.6 L731.2,213.1 L737.5,209.9 L744.2,207.2 L751.0,205.0 L757.9,203.4 L764.8,202.2 L771.6,201.7 L778.1,201.7 L784.2,202.3 L789.8,203.4Z M791.4,207.9 L927.3,244.4 L939.8,229.0 L966.5,255.0 L1102.4,291.5 L1102.4,291.5 L1107.5,293.2 L1111.9,295.5 L1115.5,298.2 L1118.4,301.3 L1120.4,304.8 L1121.5,308.7 L1121.7,312.8 L1121.0,317.1 L1119.4,321.5 L1116.9,325.9 L1113.7,330.3 L1109.6,334.6 L1109.6,334.6 L997.5,441.1 L974.3,435.8 L965.1,472.0 L853.0,578.5 L853.0,578.5 L848.3,582.6 L842.9,586.4 L837.0,589.9 L830.7,593.1 L824.0,595.8 L817.2,598.0 L810.2,599.6 L803.3,600.8 L796.6,601.3 L790.1,601.3 L784.0,600.7 L778.3,599.6 L778.3,599.6 L642.4,563.1 L615.7,537.0 L603.2,552.5 L467.3,516.0 L467.3,516.0 L462.2,514.3 L457.8,512.0 L454.2,509.3 L451.3,506.2 L449.3,502.7 L448.2,498.8 L448.0,494.7 L448.7,490.4 L450.3,486.0 L452.8,481.6 L456.0,477.2 L460.1,472.9 L460.1,472.9 L572.2,366.4 L581.3,330.2 L604.6,335.5 L716.7,229.0 L716.7,229.0 L721.4,224.9 L726.8,221.1 L732.7,217.6 L739.0,214.4 L745.7,211.7 L752.5,209.5 L759.5,207.9 L766.4,206.7 L773.1,206.2 L779.6,206.2 L785.7,206.8 L791.4,207.9Z" fill="none" stroke="#05a805" stroke-width="1.1"/>
  <path d="M732.0,138.3L1141.3,248.3M1141.3,248.3L803.7,569.2M803.7,569.2L394.4,459.2M394.4,459.2L732.0,138.3M749.0,188.3L1158.3,298.3M1158.3,298.3L820.7,619.2M820.7,619.2L411.4,509.2M411.4,509.2L749.0,188.3M732.0,138.3L749.0,188.3M1141.3,248.3L1158.3,298.3M803.7,569.2L820.7,619.2M394.4,459.2L411.4,509.2" fill="none" stroke="#111" stroke-width="1.7" stroke-linecap="round"/>
  <path d="M1133.3,225.6L424.1,426.2L433.4,453.7" fill="none" stroke="#b01818" stroke-width="1"/>
  <defs>
  <radialGradient id="gsph" cx="0.45" cy="0.42" r="0.6"><stop offset="0" stop-color="#5af51a"/><stop offset="0.7" stop-color="#38c010"/><stop offset="1" stop-color="#1d6a08"/></radialGradient>
</defs>
<!-- origin axes on stock corner -->
<path d="M1141.3,248.3L1100,128" stroke="#1a1a9a" stroke-width="1.8"/>
<path d="M1141.3,248.3L1040,344" stroke="#1f7a1f" stroke-width="2.2"/>
<path d="M1008.8,212.8L1029,213.5L1028,222.5Z" fill="#7c1a1a" stroke="#7c1a1a" stroke-width="1.5" stroke-linejoin="round"/>
<path d="M1034,348L1040.5,335L1048,340Z" fill="#1f7a1f" stroke="#1f7a1f" stroke-width="1.5" stroke-linejoin="round"/>
<!-- tag spheres -->
<g stroke="#143c08" stroke-width="0.8" fill="url(#gsph)">
  <circle cx="946.9" cy="249.7" r="11.8"/>
  <circle cx="588.4" cy="351" r="11.8"/>
  <circle cx="981.3" cy="456.5" r="11.8"/>
  <circle cx="622.8" cy="557.8" r="11.8"/>
</g>
<!-- corner gizmo -->
<path d="M1253.3,628.7L1248.5,614" stroke="#1a1a9a" stroke-width="1.4"/>
<path d="M1247.5,613L1251,621L1247,622Z" fill="#1a1a9a"/>
<path d="M1253.3,628.7L1242,626" stroke="#7c1a1a" stroke-width="1.4"/>
<path d="M1242,626L1246,623.5L1245.5,628Z" fill="#7c1a1a"/>
<path d="M1253.3,628.7L1240.5,640.8" stroke="#2a9a2a" stroke-width="1.2"/>
<text x="1246.5" y="611.5" font-family="Liberation Sans" font-size="8.5" fill="#000">Z</text>
<text x="1243" y="625" font-family="Liberation Sans" font-size="8.5" fill="#000">X</text>
<text x="1241" y="640" font-family="Liberation Sans" font-size="8.5" fill="#000">Y</text>

<!-- nav cube -->
<g fill="#e6f1fc" stroke="#5a6068" stroke-width="0.9" stroke-linejoin="round">
  <path d="M1195.6,149.2L1207,136.3L1218.5,149.2Z"/>
  <path d="M1195.6,255L1218.5,255L1207,267.5Z"/>
  <path d="M1141.5,201.9L1154.6,190.4V213.3Z"/>
  <path d="M1272.7,201.9L1259.6,190.4V213.3Z"/>
  <circle cx="1264.4" cy="144.2" r="6.7"/>
  <path d="M1187.8,143.1L1190.3,150.3Q1179,153 1169.4,163.1L1171.4,166.7L1157.8,170.8L1160.3,155.6L1163.3,157.5Q1174,146 1187.8,143.1Z"/>
  <path d="M1226.2,143.1L1223.7,150.3Q1235,153 1244.6,163.1L1242.6,166.7L1256.2,170.8L1253.7,155.6L1250.7,157.5Q1240,146 1226.2,143.1Z"/>
  <!-- cube silhouette -->
  <path d="M1171.2,182.0 L1190.3,162.3 L1200.9,160.3 L1226.0,166.2 L1231.2,167.5 L1239.8,176.1 L1248.4,205.1 L1247.1,215.7 L1226.6,235.5 L1222.7,238.1 L1210.8,242.7 L1207.5,240.8 L1183.1,234.2 L1173.2,226.9 L1165.3,197.9 L1165.9,190.0Z"/>
  <path d="M1171.9,188.0 L1171.2,182.0 M1226.6,172.2 L1226.0,166.2 M1171.9,188.0 L1195.6,193.9 L1206.8,190.6 L1226.6,172.2 L1233.2,179.4 L1213.4,197.9 L1206.8,190.6 M1231.2,167.5 L1226.6,172.2 M1233.2,179.4 L1239.2,180.1 L1239.8,176.1 M1195.6,193.9 L1193.6,203.8 L1201.6,211.1 L1211.5,209.1 L1213.4,197.9 M1171.9,188.0 L1169.2,197.9 L1193.6,203.8 M1165.3,197.9 L1169.2,197.9 M1201.6,211.1 L1209.5,237.5 L1220.0,234.8 L1211.5,209.1 M1209.5,237.5 L1207.5,240.8 M1220.0,234.8 L1226.6,235.5 M1239.2,180.1 L1248.4,205.1" fill="none"/>
</g>
<g font-family="Liberation Sans" fill="#7c828a">
  <text transform="translate(1198.3,176.8) rotate(197) translate(0,4)" text-anchor="middle" font-size="11" font-style="italic" textLength="31" lengthAdjust="spacingAndGlyphs">HAUT</text>
  <text transform="translate(1188.4,219.7) rotate(14) translate(0,3)" text-anchor="middle" font-size="8" textLength="31" lengthAdjust="spacingAndGlyphs">ARRIÈRE</text>
  <text transform="translate(1230.6,207.8) rotate(-52) translate(0,3.5)" text-anchor="middle" font-size="10" font-style="italic" textLength="38" lengthAdjust="spacingAndGlyphs">GAUCHE</text>
</g>
<!-- small axes near cube -->
<path d="M1262.3,214.4L1249.8,175.8" stroke="#4a4af0" stroke-width="1.3"/>
<path d="M1262.3,214.4L1224.8,206" stroke="#f04a4a" stroke-width="1.3" opacity="0.75"/>
<path d="M1262.3,214.4L1232,245.6" stroke="#3ae03a" stroke-width="1.3"/>
<!-- small cube -->
<g fill="#e6f1fc" stroke="#5a6068" stroke-width="0.9" stroke-linejoin="round">
  <path d="M1242,241L1251.5,238L1261,241V255L1251.5,258L1242,255Z"/>
  <path d="M1242,241L1251.5,244L1261,241M1251.5,244V258" fill="none"/>
</g>

</svg>
</div>

<!-- TAB BAR -->
<div class="a" style="left:353px;top:655px;width:90px;height:30px;border:1px solid #a8a8a8;border-radius:0 0 3px 3px;background:linear-gradient(#e2e2e2,#d6d6d6)"></div>
<svg class="a" style="left:349px;top:654px" width="32" height="30"><use href="#fclogo"/></svg>
<div class="t" style="left:384px;top:665px;font-size:11px;letter-spacing:0.2px;color:#5a5a5a">Start</div>
<svg class="a" style="left:419px;top:663px" width="17" height="17"><path d="M3,3L14,14M14,3L3,14" stroke="#6e6e6e" stroke-width="2.6"/></svg>
<div class="a" style="left:443px;top:655px;width:131px;height:33px;border:1px solid #b6b6b6;border-top:none;border-radius:0 0 3px 3px;background:linear-gradient(#ffffff,#f3f3f3)"></div>
<svg class="a" style="left:449px;top:662px" width="15" height="18"><path d="M1.5,1.5H10L13.5,5V16.5H1.5Z" fill="#f4f4f4" stroke="#8a8a8a"/><path d="M4,8L8,6L11.5,8V13L8,15L4,13Z" fill="#2d5fa8"/><circle cx="9" cy="7.5" r="2.6" fill="#d8202a"/></svg>
<div class="t" style="left:474px;top:667px;font-size:11.6px;letter-spacing:0.2px">tuto12-1 : 1*</div>
<svg class="a" style="left:550px;top:663px" width="17" height="17"><path d="M3,3L14,14M14,3L3,14" stroke="#6e6e6e" stroke-width="2.6"/></svg>


<!-- STATUS BAR -->
<div class="t" style="left:3px;top:699px;font-size:11.2px;letter-spacing:-0.08px">Non autorisé : tuto12_1.Stock.Edge10</div>
<div class="a" style="left:929px;top:691px;width:90px;height:26px;border:1px solid #ababab;border-radius:3px;background:linear-gradient(#fdfdfd,#f0f0f0)"></div>
<div class="a" style="left:930px;top:697px;width:15px;height:12px;background:linear-gradient(135deg,#4f82c8,#2a569a);border:1px solid #28508e"></div>
<svg class="a" style="left:1006px;top:702px" width="10" height="5"><path d="M1,0.5H9L5,4.5Z" fill="#555"/></svg>
<div class="a" style="left:1025px;top:691px;width:90px;height:26px;border:1px solid #ababab;border-radius:3px;background:linear-gradient(#fdfdfd,#f0f0f0)"></div>
<svg class="a" style="left:1036px;top:695px" width="18" height="18"><path d="M4,10C4,6 6,5 10,5.5M14,8C14,12 12,13 8,12.5" fill="none" stroke="#222" stroke-width="1.6"/><circle cx="12.5" cy="5" r="2.6" fill="#222"/><circle cx="5.5" cy="13" r="2.6" fill="#222"/></svg>
<div class="t" style="left:1055px;top:700px;font-size:11px;letter-spacing:-0.05px">Gesture</div>
<svg class="a" style="left:1102px;top:702px" width="10" height="5"><path d="M1,0.5H9L5,4.5Z" fill="#555"/></svg>
<div class="a" style="left:1121px;top:692px;width:139px;height:24px;border:1px solid #ababab;border-radius:3px;background:linear-gradient(#fdfdfd,#f4f4f4)"></div>
<div class="t" style="left:1126px;top:700px;font-size:11.2px;letter-spacing:0.05px">161,63 mm x 91,64 mm</div>
<svg class="a" style="left:1248px;top:702px" width="10" height="5"><path d="M1,0.5H9L5,4.5Z" fill="#606060"/></svg>
<svg class="a" style="left:1266px;top:705px" width="13" height="13"><g fill="#b0b0b0"><rect x="9" y="1" width="2" height="2"/><rect x="6" y="4" width="2" height="2"/><rect x="9" y="4" width="2" height="2"/><rect x="3" y="7" width="2" height="2"/><rect x="6" y="7" width="2" height="2"/><rect x="9" y="7" width="2" height="2"/><rect x="0" y="10" width="2" height="2"/><rect x="3" y="10" width="2" height="2"/><rect x="6" y="10" width="2" height="2"/><rect x="9" y="10" width="2" height="2"/></g></svg>

<div class="a" style="left:0;top:0;width:1280px;height:720px;border:1px solid #a6a6ae;border-radius:8px"></div>
<!-- cursor -->
<svg class="a" style="left:930px;top:30px" width="30" height="30"><path d="M12.5,7.5V23.5L16.5,20L19.5,25.5L21.5,24.5L19,19.5H23.7Z" fill="#fff" stroke="#111" stroke-width="1.1" stroke-linejoin="round"/></svg>
</body></html>
